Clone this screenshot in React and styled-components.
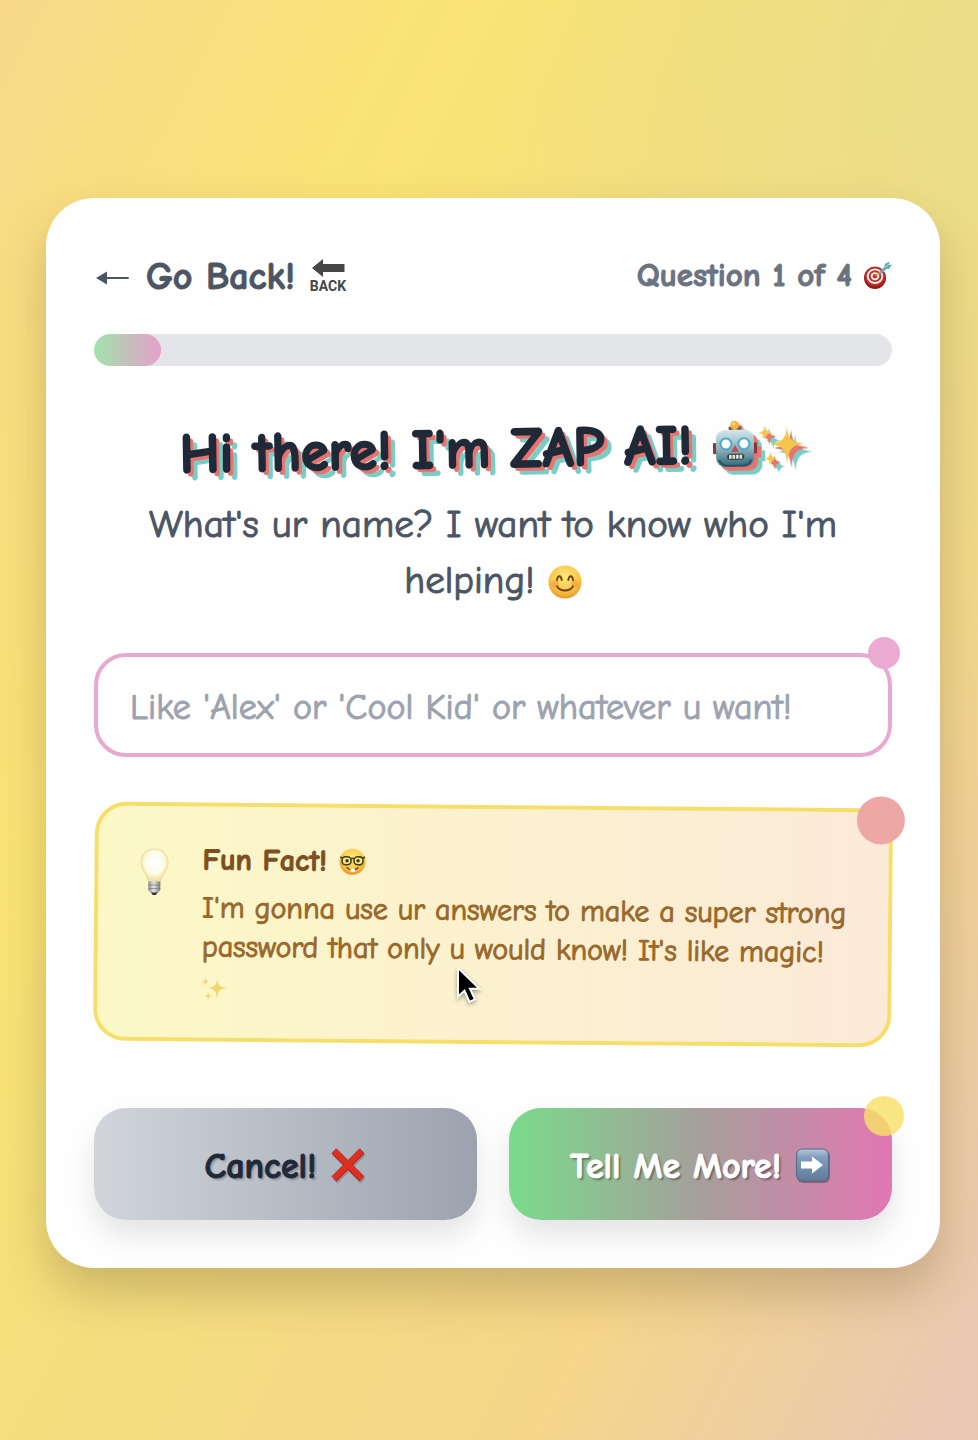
import React, { useState } from 'react';
import styled, { createGlobalStyle, css } from 'styled-components';

const GlobalStyle = createGlobalStyle`
  *, *::before, *::after { box-sizing: border-box; }
  body {
    margin: 0;
    font-family: 'Comic Neue', 'Comic Sans MS', 'Open Sans', sans-serif;
  }
  h1, h2, p { margin: 0; }
  button, input { font-family: inherit; }
`;

const heavy = css`
  font-weight: 700;
  -webkit-text-stroke: 1px currentColor;
`;

const Page = styled.main`
  position: relative;
  display: flex;
  align-items: center;
  justify-content: center;
  min-height: 100vh;
  padding: 58px 38px 32px 46px;
  background:
    radial-gradient(ellipse 50% 50% at 100% 6%, rgba(226, 226, 138, 0.55), rgba(226, 226, 138, 0)),
    linear-gradient(117deg, #f8da8a 0%, #fae474 28%, #f5de7e 44%, #f5d68a 74%, #e9c7b4 98%);
`;

const Card = styled.section`
  width: 100%;
  max-width: 896px;
  padding: 48px;
  border-radius: 48px;
  background: #fefefe;
  box-shadow: 0 24px 48px rgba(70, 50, 20, 0.24);
`;

const Header = styled.header`
  display: flex;
  align-items: center;
  justify-content: space-between;
  height: 56px;
  margin-bottom: 32px;
`;

const BackButton = styled.button`
  display: flex;
  align-items: center;
  gap: 16px;
  padding: 6px 0 0;
  border: 0;
  background: none;
  color: #4b5563;
  font-size: 38px;
  line-height: 56px;
  ${heavy}
`;

const StepCount = styled.p`
  display: flex;
  align-items: center;
  gap: 12px;
  padding-top: 2px;
  color: #6b7280;
  font-size: 33px;
  line-height: 40px;
  ${heavy}
`;

const Track = styled.div`
  height: 32px;
  margin-bottom: 48px;
  overflow: hidden;
  border-radius: 16px;
  background: #e4e5e9;
`;

const Fill = styled.div`
  height: 100%;
  border-radius: 16px;
  background: linear-gradient(90deg, #9fe3ab, #e79fcb);
`;

const Intro = styled.div`
  margin-bottom: 44px;
  padding-top: 4px;
  text-align: center;
`;

const Title = styled.h1`
  display: flex;
  align-items: center;
  justify-content: center;
  gap: 20px;
  margin-bottom: 16px;
  color: #1f2937;
  font-size: 56px;
  font-weight: 700;
  line-height: 63px;
  -webkit-text-stroke: 2px #1f2937;
  text-shadow: 4px 4px 0 #e8736f, 8px 8px 0 #7acdc6;
  transform: rotate(-1deg);
`;

const TitleIcons = styled.span`
  display: flex;
  align-items: center;
  filter: drop-shadow(4px 4px 0 #e8736f) drop-shadow(4px 4px 0 #7acdc6);
`;

const Prompt = styled.label`
  display: block;
  color: #4b5563;
  font-size: 39px;
  line-height: 56px;
  -webkit-text-stroke: 1px currentColor;
`;

const Field = styled.div`
  position: relative;
  margin-bottom: 48px;
`;

const NameInput = styled.input`
  display: block;
  width: 100%;
  height: 104px;
  padding: 4px 32px 0;
  border: 4px solid #e7a9d0;
  border-radius: 32px;
  outline: none;
  background: #fefefe;
  color: #1f2937;
  font-size: 36px;
  &::placeholder {
    color: #9ca3af;
    opacity: 1;
    -webkit-text-stroke: 1px currentColor;
  }
`;

const Dot = styled.span`
  position: absolute;
  top: ${(p) => p.$top}px;
  right: ${(p) => p.$right}px;
  width: ${(p) => p.$size}px;
  height: ${(p) => p.$size}px;
  border-radius: 50%;
  background: ${(p) => p.$color};
`;

const Fact = styled.aside`
  position: relative;
  display: flex;
  align-items: flex-start;
  gap: 24px;
  margin-bottom: 64px;
  padding: 34px 32px 32px;
  border: 4px solid #f5df6a;
  border-radius: 32px;
  background: linear-gradient(90deg, #fcf8c6, #fbead8);
  transform: rotate(0.5deg);
`;

const FactBody = styled.div`
  flex: 1;
  min-width: 0;
`;

const FactTitle = styled.h2`
  display: flex;
  align-items: center;
  gap: 12px;
  margin-bottom: 8px;
  color: #7d4f1e;
  font-size: 30px;
  line-height: 40px;
  ${heavy}
`;

const FactText = styled.p`
  color: #99682a;
  font-size: 30px;
  line-height: 39px;
  -webkit-text-stroke: 1px currentColor;
`;

const Actions = styled.div`
  display: grid;
  grid-template-columns: 1fr 1fr;
  gap: 32px;
`;

const ActionButton = styled.button`
  position: relative;
  display: flex;
  align-items: center;
  justify-content: center;
  gap: 14px;
  height: 112px;
  padding: 4px 16px 0;
  border: 0;
  border-radius: 32px;
  font-size: 36px;
  ${heavy}
  box-shadow: 0 16px 28px rgba(0, 0, 0, 0.1);
  ${(p) =>
    p.$primary
      ? css`
          background: linear-gradient(90deg, #7adb8b, #a69f9b 50%, #e277b3);
          color: #fff;
          text-shadow: 2px 2px 2px rgba(0, 0, 0, 0.4);
        `
      : css`
          background: linear-gradient(90deg, #d1d5db, #9ca3af);
          color: #1f2937;
          text-shadow: 2px 2px 2px rgba(0, 0, 0, 0.25);
        `}
`;

const Icon = styled.svg`
  flex: none;
  overflow: visible;
  vertical-align: ${(p) => (p.$inline ? '-6px' : 'baseline')};
`;

const BackLabel = styled.text`
  font: 700 14px Roboto, sans-serif;
  fill: #464646;
  -webkit-text-stroke: 0;
`;

const Pointer = styled.svg`
  position: absolute;
  top: 157px;
  left: 359px;
  transform: rotate(-0.5deg);
  filter: drop-shadow(0 2px 2px rgba(0, 0, 0, 0.35));
`;

const ArrowLeft = () => (
  <Icon width="36" height="36" viewBox="0 0 36 36" aria-hidden="true">
    <path d="M2 19 13 12.500v13z" fill="currentColor" />
    <path d="M12 19h22" stroke="currentColor" strokeWidth="2" strokeLinecap="round" />
  </Icon>
);

const BackEmoji = () => (
  <Icon width="36" height="36" viewBox="0 0 36 36" aria-hidden="true">
    <path d="M1 9 12 0v5h21.500v8H12v5z" fill="#464646" />
    <BackLabel x="17" y="32" textAnchor="middle">BACK</BackLabel>
  </Icon>
);

const TargetEmoji = () => (
  <Icon width="28" height="28" viewBox="0 0 28 28" aria-hidden="true">
    <ellipse cx="11" cy="17" rx="11" ry="11" fill="#8f1d18" />
    <ellipse cx="11" cy="15.500" rx="10.500" ry="10" fill="#bd2a22" />
    <ellipse cx="11" cy="15.200" rx="8.300" ry="7.800" fill="#f7eeee" />
    <ellipse cx="11" cy="15.200" rx="6.300" ry="5.900" fill="#c22f27" />
    <ellipse cx="11" cy="15.200" rx="4.300" ry="4" fill="#f7eeee" />
    <ellipse cx="11" cy="15.200" rx="2.300" ry="2.200" fill="#c22f27" />
    <path d="m11 15 7-5" stroke="#d9a536" strokeWidth="1.500" />
    <path d="m16.500 11.500 5.500-5" stroke="#68aeb4" strokeWidth="3" strokeLinecap="round" />
    <path d="m20 7 1-4 4.500-2.500L25 4l3-.5-3 4.500z" fill="#5caab1" />
    <path d="m21 6.500 4.500-4" stroke="#b8e2e4" strokeWidth="1" />
  </Icon>
);

const SPARK_PATHS =
  'M28 5c1.200 12 3.500 15.500 17 17-13.500 2-15.500 5-17 19-1.500-14-4.500-17-16-19 12-2 15-5.500 16-17zM7 3c.6 5.500 1.800 7.200 7 8-5.200.8-6.400 2.800-7 8-.6-5.200-1.800-7.200-7-8 5.200-.8 6.400-2.500 7-8zM12 29c.6 4.500 1.800 6.200 6 7-4.200.8-5.400 2.800-6 7-.6-4.200-1.800-6.200-6-7 4.200-.8 5.400-2.500 6-7z';

const Sparkles = ({ size, color = '#f4c64c', inline }) => (
  <Icon width={size} height={size} viewBox="0 0 46 46" $inline={inline} role="img" aria-label="sparkles">
    <path d={SPARK_PATHS} fill={color} />
  </Icon>
);

const Robot = () => (
  <Icon width="46" height="50" viewBox="0 0 46 50" role="img" aria-label="robot">
    <defs>
      <linearGradient id="robotFace" x1="0" y1="0" x2="0" y2="1">
        <stop offset="0" stopColor="#d5e7eb" />
        <stop offset=".5" stopColor="#8fb5bf" />
        <stop offset="1" stopColor="#2f6676" />
      </linearGradient>
    </defs>
    <path d="M17 9q6 6 12 0V6H17z" fill="#5a4763" />
    <circle cx="23" cy="4.500" r="4.500" fill="#f3b13f" />
    <circle cx="22" cy="3" r="1.500" fill="#fce49a" />
    <path d="M1 22h5v11H1zM40 22h5v11h-5z" fill="#8b3440" />
    <rect x="4" y="9" width="38" height="37" rx="9" fill="url(#robotFace)" />
    <path d="M7 39q2 6 9 6h14q7 0 9-6" fill="none" stroke="#24505f" strokeWidth="2" />
    <circle cx="14" cy="23" r="5.500" fill="#fff" stroke="#48a4cb" strokeWidth="2" />
    <circle cx="32" cy="23" r="5.500" fill="#fff" stroke="#48a4cb" strokeWidth="2" />
    <path d="m23 24 4 7h-8z" fill="#c05050" />
    <rect x="15" y="33" width="17" height="6" rx="3" fill="#273b42" />
    <path d="M17 36h13" stroke="#f5eddf" strokeWidth="4" strokeDasharray="2.500 1" />
  </Icon>
);

const FaceDefs = () => (
  <radialGradient id="faceFill" cx=".5" cy=".35" r=".65">
    <stop offset="0" stopColor="#fee883" />
    <stop offset=".65" stopColor="#fbc845" />
    <stop offset="1" stopColor="#e8962b" />
  </radialGradient>
);

const SmileEmoji = () => (
  <Icon width="34" height="34" viewBox="0 0 36 36" $inline role="img" aria-label="smiling face">
    <defs><FaceDefs /></defs>
    <circle cx="18" cy="18" r="17.500" fill="url(#faceFill)" />
    <circle cx="7.500" cy="20" r="4" fill="#f58b3a" opacity=".45" />
    <circle cx="28.500" cy="20" r="4" fill="#f58b3a" opacity=".45" />
    <g fill="none" stroke="#6f4312" strokeWidth="2" strokeLinecap="round">
      <path d="M9.500 16c.7-5.500 4.500-5.500 5 0M21.500 16c.7-5.500 4.500-5.500 5 0" />
      <path d="M9.500 22.500c3.500 6 13.500 6 17 0" />
    </g>
  </Icon>
);

const NerdEmoji = () => (
  <Icon width="28" height="28" viewBox="0 0 28 28" role="img" aria-label="nerd face">
    <circle cx="14" cy="14" r="13" fill="url(#faceFill)" />
    <g fill="#f6e58c" stroke="#40421d" strokeWidth="1.600">
      <rect x="3.500" y="9" width="9" height="8" rx="3.500" />
      <rect x="15.500" y="9" width="9" height="8" rx="3.500" />
      <path d="M1.500 9.500 4 10M26.500 9.500 24 10M12.500 11q1.500-1 3 0" />
    </g>
    <circle cx="8.500" cy="13" r="1.700" fill="#4d370e" />
    <circle cx="19.500" cy="13" r="1.700" fill="#4d370e" />
    <path d="M8 19.500q6 5.500 12 0" fill="none" stroke="#8a4a14" strokeWidth="1.500" />
    <path d="M12 21h4.500v3H12z" fill="#fff" />
  </Icon>
);

const BulbEmoji = () => (
  <Icon width="48" height="64" viewBox="0 0 48 64" role="img" aria-label="light bulb">
    <defs>
      <radialGradient id="bulbGlass" cx=".5" cy=".42" r=".58">
        <stop offset="0" stopColor="#fff" />
        <stop offset=".6" stopColor="#fefbe9" />
        <stop offset="1" stopColor="#efdc94" />
      </radialGradient>
      <linearGradient id="bulbBase">
        <stop offset="0" stopColor="#8b8b8b" />
        <stop offset=".45" stopColor="#e6e6e6" />
        <stop offset="1" stopColor="#777" />
      </linearGradient>
    </defs>
    <path d="M24 9c-8 0-13.500 6-13.500 13 0 8 6 11 7.500 19.500h12c1.500-8.500 7.500-11.500 7.500-19.500C37.500 15 32 9 24 9z" fill="url(#bulbGlass)" stroke="#eddc9c" />
    <path d="M18 41.500h12V50l-2.500 3h-7L18 50z" fill="url(#bulbBase)" />
    <path d="M18 45h12M18 48.500h12" stroke="#777" strokeWidth=".7" />
    <path d="M20.500 52.500h7L25.500 55h-3z" fill="#333" />
  </Icon>
);

const CrossEmoji = () => (
  <Icon width="36" height="36" viewBox="0 0 36 36" aria-hidden="true">
    <path d="m5 5 28 28M33 5 5 33" stroke="#777b85" strokeWidth="7" opacity=".6" />
    <path d="m4 3 28 28M32 3 4 31" stroke="#b82018" strokeWidth="7" />
    <path d="m4 2.500 28 28M32 2.500 4 30.500" stroke="#dd3023" strokeWidth="5.500" />
  </Icon>
);

const NextEmoji = () => (
  <Icon width="36" height="36" viewBox="0 0 36 36" aria-hidden="true">
    <defs>
      <linearGradient id="nextFill" x1="0" y1="0" x2="0" y2="1">
        <stop offset="0" stopColor="#b5c9dc" />
        <stop offset=".25" stopColor="#829fbd" />
        <stop offset="1" stopColor="#5f7a97" />
      </linearGradient>
    </defs>
    <rect x="2" y="2" width="33" height="33" rx="6" fill="#5b4b5c" opacity=".6" />
    <rect x="1.500" y="1" width="32" height="32" rx="6" fill="url(#nextFill)" stroke="#526a87" />
    <path d="M6 13.500h11V8.500l11 8.500-11 8.500v-5H6z" fill="#fff" />
  </Icon>
);

const STEP = 1;
const TOTAL = 4;
const PROGRESS = 8.4;

export default function App() {
  const [name, setName] = useState('');
  return (
    <>
      <GlobalStyle />
      <Page>
        <Card>
          <Header>
            <BackButton type="button">
              <ArrowLeft />
              <span>Go Back!</span>
              <BackEmoji />
            </BackButton>
            <StepCount>
              Question {STEP} of {TOTAL}
              <TargetEmoji />
            </StepCount>
          </Header>
          <Track role="progressbar" aria-label="Progress" aria-valuemin={0} aria-valuemax={100} aria-valuenow={PROGRESS}>
            <Fill style={{ width: `${PROGRESS}%` }} />
          </Track>
          <Intro>
            <Title>
              Hi there! I'm ZAP AI!
              <TitleIcons>
                <Robot />
                <Sparkles size={48} />
              </TitleIcons>
            </Title>
            <Prompt htmlFor="name">
              What's ur name? I want to know who I'm helping! <SmileEmoji />
            </Prompt>
          </Intro>
          <Field>
            <NameInput
              id="name"
              type="text"
              value={name}
              onChange={(e) => setName(e.target.value)}
              placeholder="Like 'Alex' or 'Cool Kid' or whatever u want!"
            />
            <Dot $size={32} $top={-16} $right={-8} $color="#eaaad2" />
          </Field>
          <Fact>
            <BulbEmoji />
            <FactBody>
              <FactTitle>
                Fun Fact! <NerdEmoji />
              </FactTitle>
              <FactText>
                I'm gonna use ur answers to make a super strong password that only u would know! It's like magic!{' '}
                <Sparkles size={26} color="#f3d667" inline />
              </FactText>
            </FactBody>
            <Dot $size={48} $top={-16} $right={-16} $color="rgba(236, 164, 161, 0.96)" />
            <Pointer width="26" height="40" viewBox="0 0 26 40" aria-hidden="true">
              <path d="M1.500 2v29l6.500-6 5 11 5.500-2.500-5-10.500H23z" fill="#000" stroke="#fff" strokeWidth="2" />
            </Pointer>
          </Fact>
          <Actions>
            <ActionButton type="button">
              Cancel!
              <CrossEmoji />
            </ActionButton>
            <ActionButton type="button" $primary>
              Tell Me More!
              <NextEmoji />
              <Dot $size={40} $top={-12} $right={-12} $color="rgba(247, 224, 104, 0.82)" />
            </ActionButton>
          </Actions>
        </Card>
      </Page>
    </>
  );
}
